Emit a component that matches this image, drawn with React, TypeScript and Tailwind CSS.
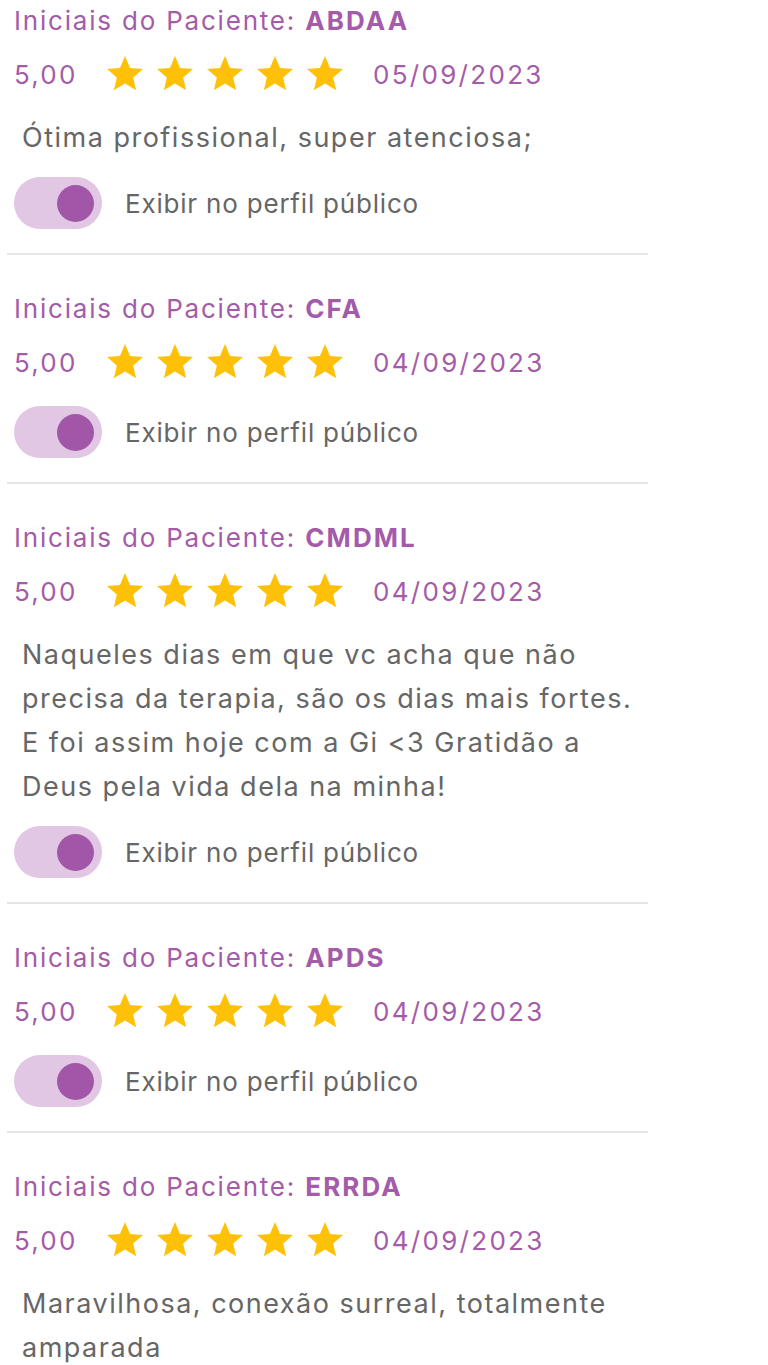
import React from "react";

type Review = { initials: string; date: string; comment?: string };

const reviews: Review[] = [
  { initials: "ABDAA", date: "05/09/2023", comment: "Ótima profissional, super atenciosa;" },
  { initials: "CFA", date: "04/09/2023" },
  {
    initials: "CMDML",
    date: "04/09/2023",
    comment:
      "Naqueles dias em que vc acha que não precisa da terapia, são os dias mais fortes. E foi assim hoje com a Gi <3 Gratidão a Deus pela vida dela na minha!",
  },
  { initials: "APDS", date: "04/09/2023" },
  { initials: "ERRDA", date: "04/09/2023", comment: "Maravilhosa, conexão surreal, totalmente amparada" },
];

function Star() {
  return (
    <svg width="36" height="36" viewBox="2 2 20 20" className="shrink-0">
      <path
        fill="#ffc107"
        d="M12 17.27L18.18 21l-1.64-7.03L22 9.24l-7.19-.61L12 2 9.19 8.63 2 9.24l5.46 4.73L5.82 21z"
      />
    </svg>
  );
}

function Toggle() {
  return (
    <div className="relative h-[52px] w-[88px] shrink-0 rounded-full bg-[#e1c7e3]">
      <div className="absolute right-[8px] top-[7.5px] h-[37px] w-[37px] rounded-full bg-[#a256a8]" />
    </div>
  );
}

function Card({ r }: { r: Review }) {
  return (
    <div>
      <div className="pl-[14px] pt-[32px]">
        <div className="h-[44px] whitespace-nowrap text-[26px] leading-[44px] tracking-[1.8px] text-[#a45ba9]">
          Iniciais do Paciente: <span className="font-bold tracking-[2.1px]">{r.initials}</span>
        </div>
        <div className="mt-[9px] flex h-[44px] items-center text-[26px] text-[#a45ba9]">
          <span className="w-[93px] tracking-[2.2px]">5,00</span>
          <div className="flex gap-[14px]">
            <Star />
            <Star />
            <Star />
            <Star />
            <Star />
          </div>
          <span className="ml-[30px] tracking-[2.3px]">{r.date}</span>
        </div>
        {r.comment && (
          <div className="mt-[20px] pl-[8px] text-[27px] leading-[44px] tracking-[1.5px] text-[#666666]">
            {r.comment}
          </div>
        )}
        <div className={r.comment ? "mt-[17px] flex items-center" : "mt-[22px] flex items-center"}>
          <Toggle />
          <span className="ml-[23px] whitespace-nowrap text-[26px] tracking-[0.8px] text-[#666666]">
            Exibir no perfil público
          </span>
        </div>
      </div>
      <div className="ml-[7px] mt-[24px] h-[2px] bg-[#e6e6e6]" />
    </div>
  );
}

export default function App() {
  return (
    <div className="h-[1365px] w-[768px] overflow-hidden bg-white font-['Inter','Noto_Sans',sans-serif]">
      <div className="-mt-[33px] w-[648px]">
        {reviews.map((r) => (
          <Card key={r.initials} r={r} />
        ))}
      </div>
    </div>
  );
}
